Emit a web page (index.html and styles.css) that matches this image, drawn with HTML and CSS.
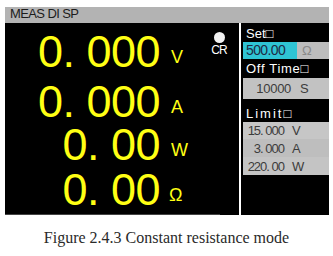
FILE: index.html
```html
<!DOCTYPE html>
<html lang="en">
<head>
  <meta charset="UTF-8" />
  <title>MEAS DISP - CR mode</title>
  <link rel="stylesheet" href="styles.css">
</head>
<body>
  <div class="screen">
    <div class="title-bar">MEAS DI SP</div>

    <div class="main">
      <!-- Measured values -->
      <div class="readings">
        <div class="reading r-volt"><span class="num">0. 000</span><span class="unit">V</span></div>
        <div class="reading r-amp"><span class="num">0. 000</span><span class="unit">A</span></div>
        <div class="reading r-watt"><span class="num">0. 00</span><span class="unit">W</span></div>
        <div class="reading r-ohm"><span class="num">0. 00</span><span class="unit ohm">Ω</span></div>

        <!-- Mode indicator -->
        <div class="mode">
          <span class="dot"></span>
          <span class="mode-name">CR</span>
        </div>
        <div class="base-line"></div>
      </div>

      <!-- Settings panel -->
      <div class="side">
        <div class="label l-set">Set□</div>
        <div class="field set-field">
          <span class="set-val">500.00</span>
          <span class="set-unit">Ω</span>
        </div>

        <div class="label l-off">Off Time□</div>
        <div class="field off-field">
          <span class="val">10000</span><span class="unit-s">S</span>
        </div>

        <div class="label l-limit">Limit□</div>
        <div class="field limit lim-1"><span class="val">15. 000</span><span class="unit-s">V</span></div>
        <div class="field limit lim-2"><span class="val">3. 000</span><span class="unit-s">A</span></div>
        <div class="field limit lim-3"><span class="val">220. 00</span><span class="unit-s">W</span></div>
      </div>
    </div>
  </div>

  <p class="caption">Figure 2.4.3 Constant resistance mode</p>
</body>
</html>
```

FILE: styles.css
```css
body {
  margin: 0;
  background-color: white;
  font-family: "Liberation Sans", Arial, sans-serif;
}

.screen {
  margin: 7px 4px 0 5px;
  width: 324px;
}

.title-bar {
  height: 16px;
  background-color: #b3b3b3;
  color: #1c1c1c;
  font-size: 13px;
  line-height: 14px;
  padding-left: 5px;
  letter-spacing: -0.6px;
}

.main {
  display: grid;
  grid-template-columns: 234px 88px;
  column-gap: 2px;
  height: 192px;
}

/* left: big yellow readings */
.readings {
  background-color: #000;
  color: #ffff14;
  position: relative;
  padding-top: 7px;
  display: flex;
  flex-direction: column;
}

.reading {
  font-size: 45px;
  line-height: 43px;
  white-space: pre;
}

.r-volt { height: 50px; }
.r-amp { height: 43px; }
.r-watt { height: 45px; }
.r-ohm { height: 45px; }

.num {
  display: inline-block;
  width: 155px;
  text-align: right;
  letter-spacing: -0.5px;
}

.unit {
  font-size: 18px;
  margin-left: 11px;
  vertical-align: 4px;
}

.unit.ohm {
  margin-left: 9px;
}

.mode {
  position: absolute;
  left: 206px;
  top: 9px;
  width: 16px;
  display: flex;
  flex-direction: column;
  align-items: center;
}

.dot {
  width: 11px;
  height: 11px;
  border-radius: 50%;
  background-color: #f2f2f2;
}

.mode-name {
  color: white;
  font-size: 12px;
  line-height: 11px;
  margin-top: 2px;
  letter-spacing: -1px;
}

.base-line {
  margin-top: auto;
  width: 215px;
  height: 1px;
  background-color: #444;
}

/* right: settings */
.side {
  background-color: #000;
  padding-left: 2px;
}

.label {
  color: white;
  font-size: 13px;
  padding-left: 3px;
  box-sizing: border-box;
}

.l-set {
  height: 19px;
  line-height: 16px;
  padding-top: 3px;
}

.l-off {
  height: 19px;
  line-height: 16px;
  padding-top: 2px;
  letter-spacing: 0.7px;
}

.l-limit {
  height: 23px;
  line-height: 16px;
  padding-top: 7px;
  letter-spacing: 2px;
}

.field {
  display: flex;
  align-items: center;
  font-size: 13px;
  color: #3c3c3c;
  background-color: #c2c2c2;
}

.set-field {
  height: 17px;
  background-color: #bdbdbd;
}

.set-val {
  width: 54px;
  height: 17px;
  line-height: 17px;
  padding-left: 3px;
  box-sizing: border-box;
  background-color: #2fc4d4;
  color: #1e2a44;
  font-size: 14px;
  letter-spacing: -0.6px;
}

.set-unit {
  margin-left: 5px;
  color: #8a8a8a;
}

.off-field {
  height: 21px;
}

.off-field .val {
  width: 48px;
  text-align: right;
  letter-spacing: -0.3px;
}

.off-field .unit-s {
  margin-left: 9px;
}

.limit {
  height: 18px;
}

.lim-1 { height: 17px; background-color: #c6c6c6; }
.lim-2 { background-color: #bebebe; }
.lim-3 { background-color: #c4c4c4; }

.limit .val {
  width: 41px;
  text-align: right;
  white-space: pre;
  letter-spacing: -1px;
}

.limit .unit-s {
  margin-left: 8px;
}

.caption {
  margin: 14px 0 0;
  text-align: center;
  font-family: "Liberation Serif", "Times New Roman", serif;
  font-size: 16px;
  line-height: 18px;
  color: #2a2a2a;
}
```
